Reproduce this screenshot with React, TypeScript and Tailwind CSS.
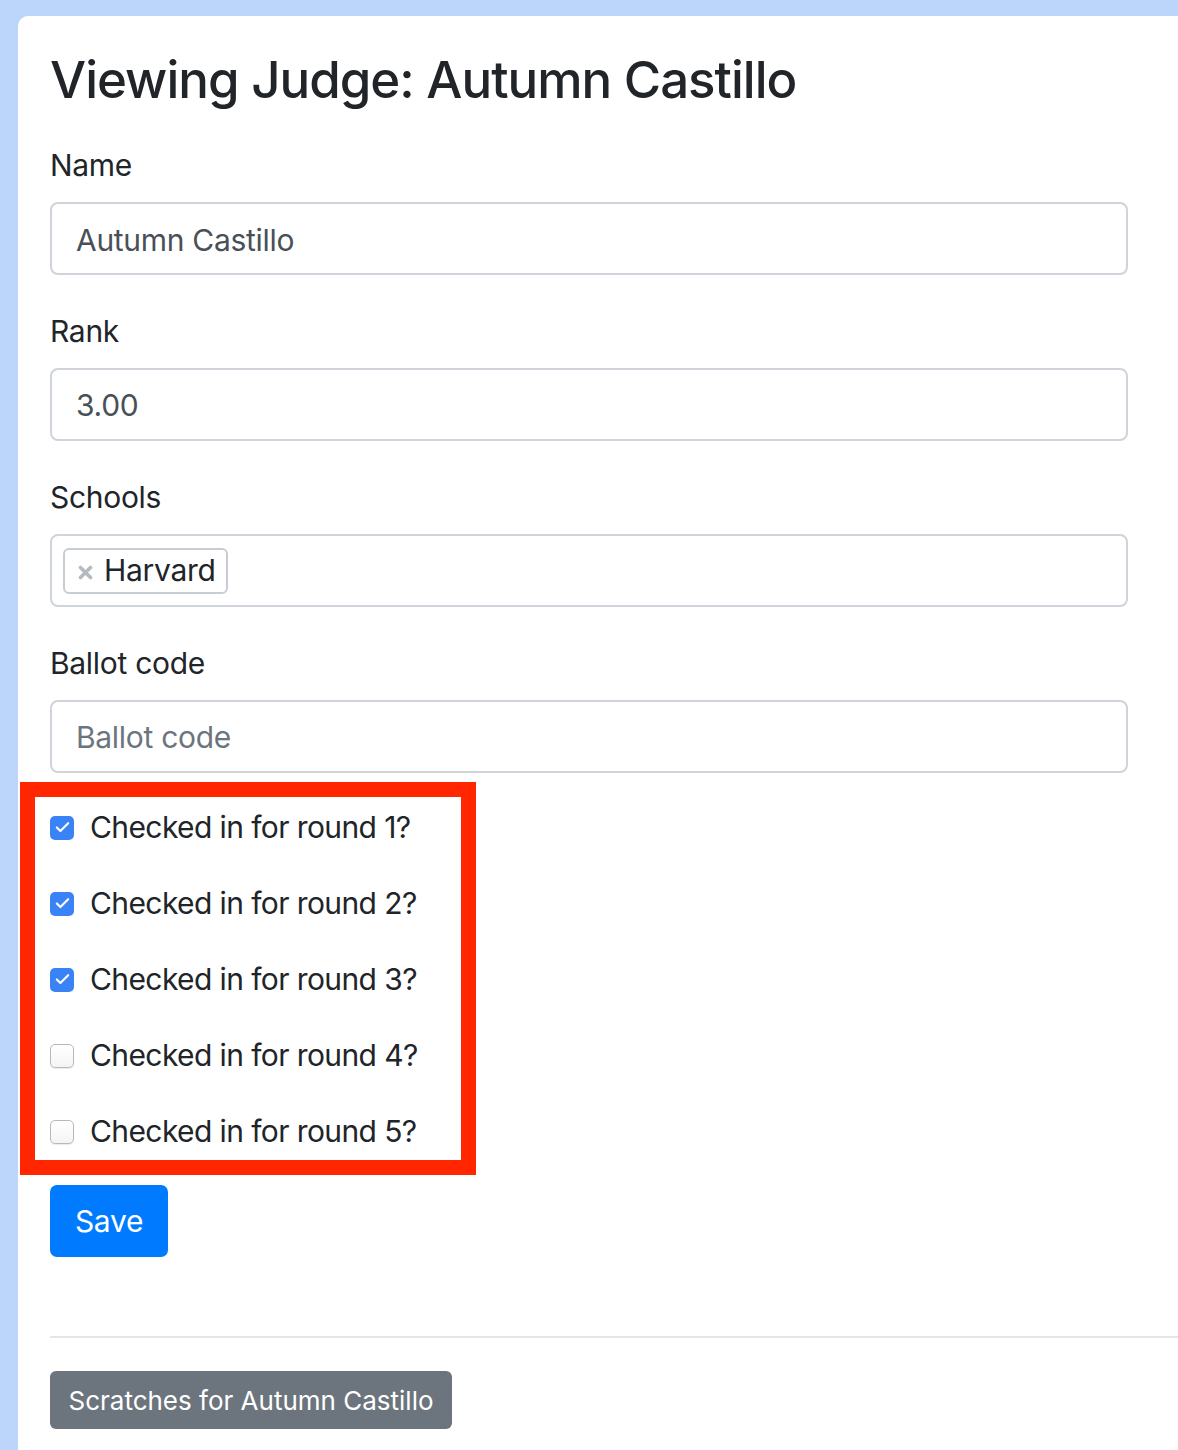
import { Check } from 'lucide-react';

const rounds = [
  { n: 1, checked: true },
  { n: 2, checked: true },
  { n: 3, checked: true },
  { n: 4, checked: false },
  { n: 5, checked: false },
];

function Field({ label, children }: { label: string; children: React.ReactNode }) {
  return (
    <div className="mb-[33px]">
      <label className="block h-[46px] leading-[46px] text-[30px] text-[#212529] mb-[14px] tracking-[-0.3px]">{label}</label>
      {children}
    </div>
  );
}

export default function App() {
  return (
    <div
      className="w-[1178px] h-[1450px] overflow-hidden bg-[#bcd6fb] pt-[16px] pl-[18px]"
      style={{ fontFamily: 'Inter, "Liberation Sans", sans-serif' }}
    >
      <div className="bg-white rounded-tl-[10px] h-full pl-[32px] pt-[32px]">
        <h1 className="h-[68px] leading-[64px] text-[51px] font-medium text-[#212529] mb-[26px] tracking-[-1px]">
          Viewing Judge: Autumn Castillo
        </h1>

        <Field label="Name">
          <div className="w-[1078px] h-[73px] border-2 border-[#ced4da] rounded-[8px] px-[24px] pt-[4px] flex items-center text-[30px] text-[#495057] tracking-[-0.3px]">
            Autumn Castillo
          </div>
        </Field>

        <Field label="Rank">
          <div className="w-[1078px] h-[73px] border-2 border-[#ced4da] rounded-[8px] px-[24px] pt-[2px] flex items-center text-[30px] text-[#495057] tracking-[-0.3px]">
            3.00
          </div>
        </Field>

        <Field label="Schools">
          <div className="w-[1078px] h-[73px] border-2 border-[#ced4da] rounded-[8px] px-[11px] flex items-center">
            <span className="h-[46px] flex items-center gap-[11px] border-2 border-[#c8cdd3] rounded-[6px] pl-[13px] pr-[10px] text-[30px] text-[#212529] tracking-[-0.3px]">
              <svg width="15" height="15" viewBox="0 0 15 15" className="mt-[3px]">
                <path d="M2.5 2.5 L12.5 12.5 M12.5 2.5 L2.5 12.5" stroke="#b5bac0" strokeWidth="3.6" strokeLinecap="round" />
              </svg>
              Harvard
            </span>
          </div>
        </Field>

        <div>
          <label className="block h-[46px] leading-[46px] text-[30px] text-[#212529] mb-[14px] tracking-[-0.3px]">Ballot code</label>
          <div className="w-[1078px] h-[73px] border-2 border-[#ced4da] rounded-[8px] px-[24px] pt-[2px] flex items-center text-[30px] text-[#6c757d] tracking-[-0.3px]">
            Ballot code
          </div>
        </div>

        <div className="mt-[9px] -ml-[30px] w-[456px] border-[15px] border-[#ff2600] pl-[15px] pt-[8px] pb-[6px] flex flex-col gap-[31px]">
          {rounds.map((r) => (
            <label key={r.n} className="h-[45px] flex items-center gap-[16px] text-[30px] text-[#212529] tracking-[-0.6px]">
              {r.checked ? (
                <span className="w-[24px] h-[24px] rounded-[5px] bg-[#3a83f7] flex items-center justify-center">
                  <Check className="w-[17px] h-[17px] text-white" strokeWidth={3} />
                </span>
              ) : (
                <span className="w-[24px] h-[24px] rounded-[5px] border border-[#b9b9b9] bg-gradient-to-b from-white to-[#f4f4f4] shadow-[0_1px_1px_rgba(0,0,0,0.08)]" />
              )}
              Checked in for round {r.n}?
            </label>
          ))}
        </div>

        <button className="mt-[10px] w-[118px] h-[72px] rounded-[7px] bg-[#007bff] text-white text-[30px] tracking-[-0.3px]">
          Save
        </button>

        <div className="mt-[79px] h-[2px] bg-[#e5e5e5]" />

        <button className="mt-[33px] h-[58px] w-[402px] rounded-[6px] bg-[#6c757d] text-white text-[26px]">
          Scratches for Autumn Castillo
        </button>
      </div>
    </div>
  );
}
